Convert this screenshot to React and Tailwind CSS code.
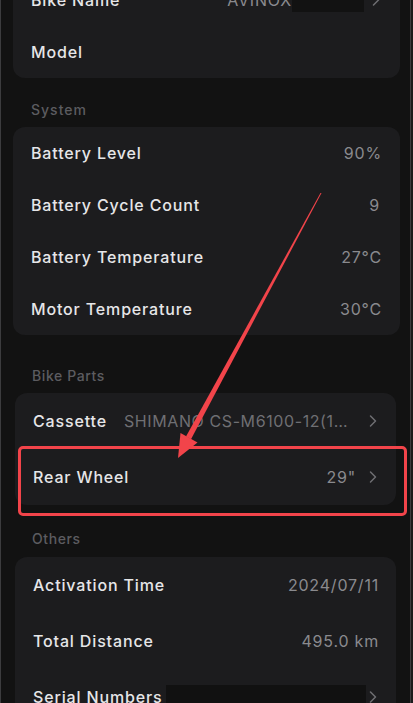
import React from 'react';

const Chevron = () => (
  <svg width="8" height="14" viewBox="0 0 8 14" className="shrink-0">
    <path d="M1.5 2l5 5-5 5" fill="none" stroke="#6e6e72" strokeWidth="1.5" strokeLinecap="round" strokeLinejoin="round" />
  </svg>
);

function Row({ label, value, chevron, h, pl, pr, children }) {
  return (
    <div className={`flex items-center ${h} ${pl} ${pr}`}>
      <span className="text-[16px] font-medium tracking-[0.85px] text-[#e6e6e8] whitespace-nowrap">{label}</span>
      {children ? children : (
        <span className="ml-auto text-[16px] tracking-[0.8px] text-[#8a8a8e] whitespace-nowrap">{value}</span>
      )}
      {chevron && <span className="ml-[13px] flex"><Chevron /></span>}
    </div>
  );
}

export default function App() {
  return (
    <div className="h-[703px] w-[413px] overflow-hidden bg-[#1b1b1b]" style={{ fontFamily: 'Inter, "Noto Sans", sans-serif' }}>
      <div className="relative h-[703px] w-[411px] overflow-hidden border-x border-[#3c3c3e] bg-[#121212]">
        <div className="-mt-[26px]">
          {/* Bike info */}
          <div className="ml-[12px] mr-[10px] rounded-[12px] bg-[#1c1c1e]">
            <div className="flex h-[52px] items-center pl-[18px] pr-[20px]">
              <span className="text-[16px] font-medium tracking-[0.85px] text-[#e6e6e8]">Bike Name</span>
              <span className="ml-auto text-[16px] tracking-[0.8px] text-[#8a8a8e]">AVINOX</span>
              <span className="h-[38px] w-[72px] self-start bg-[#121212]" />
              <span className="ml-[8px] flex"><Chevron /></span>
            </div>
            <div className="flex h-[52px] items-center pl-[18px] pr-[18px]">
              <span className="text-[16px] font-medium tracking-[0.85px] text-[#e6e6e8]">Model</span>
            </div>
          </div>

          <div className="flex h-[49px] items-end pb-[7px] pl-[30px]">
            <span className="text-[14px] font-medium tracking-[1px] text-[#5c5c60]">System</span>
          </div>
          <div className="ml-[12px] mr-[10px] rounded-[12px] bg-[#1c1c1e]">
            <Row label="Battery Level" value="90%" h="h-[52px]" pl="pl-[18px]" pr="pr-[18px]" />
            <Row label="Battery Cycle Count" value="9" h="h-[52px]" pl="pl-[18px]" pr="pr-[20px]" />
            <Row label="Battery Temperature" value="27°C" h="h-[52px]" pl="pl-[18px]" pr="pr-[18px]" />
            <Row label="Motor Temperature" value="30°C" h="h-[52px]" pl="pl-[18px]" pr="pr-[18px]" />
          </div>

          <div className="flex h-[58px] items-end pb-[7px] pl-[31px]">
            <span className="text-[14px] font-medium tracking-[0.6px] text-[#5c5c60]">Bike Parts</span>
          </div>
          <div className="ml-[14px] mr-[14px] rounded-[12px] bg-[#1c1c1e]">
            <Row label="Cassette" chevron h="h-[56px]" pl="pl-[18px]" pr="pr-[19px]">
              <span className="ml-[17px] min-w-0 flex-1 truncate text-[16px] tracking-[0.6px] text-[#6f6f73]">SHIMANO CS-M6100-12(10-51T)</span>
            </Row>
            <Row label="Rear Wheel" value={'29"'} chevron h="h-[56px]" pl="pl-[18px]" pr="pr-[19px]" />
          </div>

          <div className="flex h-[52px] items-end pb-[8px] pl-[31px]">
            <span className="text-[14px] font-medium tracking-[0.6px] text-[#5c5c60]">Others</span>
          </div>
          <div className="ml-[14px] mr-[14px] rounded-[12px] bg-[#1c1c1e]">
            <Row label="Activation Time" value="2024/07/11" h="h-[56px]" pl="pl-[18px]" pr="pr-[17px]" />
            <Row label="Total Distance" value="495.0 km" h="h-[56px]" pl="pl-[18px]" pr="pr-[17px]" />
            <div className="flex h-[56px] items-center pl-[18px] pr-[19px]">
              <span className="text-[16px] font-medium tracking-[0.85px] text-[#e6e6e8] whitespace-nowrap">Serial Numbers</span>
              <span className="ml-[4px] h-[40px] flex-1 self-end bg-[#111111]" />
              <span className="ml-[3px] flex"><Chevron /></span>
            </div>
          </div>
        </div>

        {/* annotation */}
        <div className="absolute left-[17px] top-[446px] h-[70px] w-[389px] rounded-[5px] border-[3px] border-[#f2444a]" />
        <svg className="absolute left-0 top-0" width="411" height="703" viewBox="0 0 411 703">
          <polygon points="320.5,193 319.5,193 185,436.4 190,439.2" fill="#f2444a" />
          <polygon points="177,458 179.5,433 196.5,442.5" fill="#f2444a" />
        </svg>
      </div>
    </div>
  );
}
